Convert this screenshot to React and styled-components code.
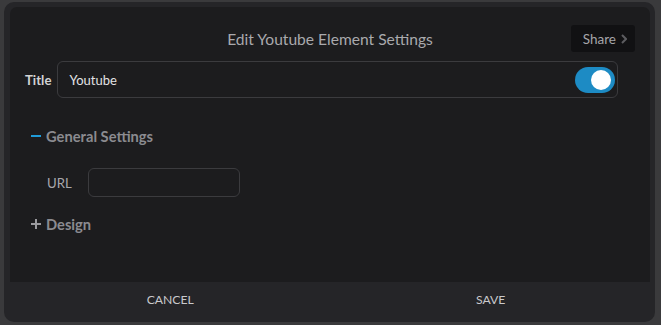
import React, { useState } from "react";
import styled, { createGlobalStyle } from "styled-components";

const GlobalStyle = createGlobalStyle`
  html, body {
    margin: 0;
    padding: 0;
    background: #3a3a3c;
    font-family: Lato, "Open Sans", sans-serif;
    overflow: hidden;
  }
`;

const Page = styled.div`
  width: 661px;
  height: 325px;
  padding: 2px 6px 3px 4px;
  box-sizing: border-box;
`;

const Modal = styled.div`
  display: flex;
  flex-direction: column;
  height: 100%;
  padding: 5px 5px 5px 6px;
  box-sizing: border-box;
  background: #252528;
  border-radius: 10px;
`;

const Panel = styled.div`
  flex: 1;
  display: flex;
  flex-direction: column;
  padding: 18px 15px 0 15px;
  background: #1c1c1e;
  border-radius: 7px 7px 0 0;
`;

const Header = styled.div`
  display: grid;
  grid-template-columns: 1fr auto 1fr;
  align-items: center;
  height: 27px;
`;

const HeaderTitle = styled.div`
  grid-column: 2;
  font-size: 15.6px;
  color: #a9a9ad;
  margin-top: 1px;
`;

const ShareButton = styled.button`
  grid-column: 3;
  justify-self: end;
  display: flex;
  align-items: center;
  gap: 5px;
  height: 27px;
  padding: 0 8px 0 12px;
  border: none;
  border-radius: 3px;
  background: #111113;
  color: #a5a5a9;
  font-family: inherit;
  font-size: 13.5px;
`;

const TitleRow = styled.div`
  display: flex;
  align-items: center;
  gap: 6px;
  margin: 9px 17px 0 0;
`;

const Label = styled.label`
  font-size: 13.2px;
  font-weight: ${(p) => (p.$bold ? 700 : 400)};
  color: ${(p) => (p.$bold ? "#d2d2d4" : "#a8a8ac")};
`;

const TitleBox = styled.div`
  flex: 1;
  display: flex;
  align-items: center;
  justify-content: space-between;
  height: 37px;
  padding: 0 2px 0 11px;
  box-sizing: border-box;
  border: 1px solid #3b3b3e;
  border-radius: 6px;
  font-size: 13px;
  color: #e2e2e4;
`;

const Toggle = styled.button`
  position: relative;
  width: 40px;
  height: 26px;
  padding: 0;
  border: none;
  border-radius: 13px;
  background: ${(p) => (p.$on ? "#1d8bc4" : "#4a4a4e")};
  cursor: pointer;
`;

const Knob = styled.span`
  position: absolute;
  top: 3px;
  left: ${(p) => (p.$on ? "16px" : "4px")};
  width: 20px;
  height: 20px;
  border-radius: 50%;
  background: #ffffff;
`;

const Section = styled.div`
  margin-left: 6px;
`;

const SectionHeader = styled.div`
  display: flex;
  align-items: center;
  gap: 5px;
  margin-top: ${(p) => p.$top}px;
  height: 18px;
  font-size: 14.7px;
  font-weight: 700;
  color: #8b8b90;
`;

const Sign = styled.span`
  position: relative;
  width: 10px;
  height: 10px;
  &::before,
  &::after {
    content: "";
    position: absolute;
    background: ${(p) => (p.$open ? "#1f9bd8" : "#9a9a9e")};
  }
  &::before {
    left: 0;
    right: 0;
    top: 4px;
    height: 2px;
  }
  &::after {
    display: ${(p) => (p.$open ? "none" : "block")};
    top: 0;
    bottom: 0;
    left: 4px;
    width: 2px;
  }
`;

const FieldRow = styled.div`
  display: flex;
  align-items: center;
  gap: 16px;
  margin: 23px 0 0 16px;
`;

const TextInput = styled.input`
  width: 152px;
  height: 29px;
  box-sizing: border-box;
  border: 1px solid #3b3b3e;
  border-radius: 6px;
  background: transparent;
  color: #e2e2e4;
  font-family: inherit;
  font-size: 13px;
  padding: 0 10px;
  outline: none;
`;

const Footer = styled.div`
  display: flex;
  height: 35px;
  margin: 0 -5px 0 -6px;
`;

const FooterButton = styled.button`
  flex: 1;
  border: none;
  background: transparent;
  color: #c9c9cc;
  font-family: inherit;
  font-size: 12.2px;
  text-transform: uppercase;
  cursor: pointer;
  padding: 0 ${(p) => (p.$right ? p.$right : 0)}px 0 ${(p) => (p.$left ? p.$left : 0)}px;
`;

const Chevron = () => (
  <svg width="6" height="10" viewBox="0 0 6 10">
    <path d="M1 1l4 4-4 4" fill="none" stroke="#5c5c60" strokeWidth="2" />
  </svg>
);

const App = () => {
  const [enabled, setEnabled] = useState(true);
  const [url, setUrl] = useState("");

  return (
    <>
      <GlobalStyle />
      <Page>
        <Modal>
          <Panel>
            <Header>
              <HeaderTitle>Edit Youtube Element Settings</HeaderTitle>
              <ShareButton>
                Share <Chevron />
              </ShareButton>
            </Header>
            <TitleRow>
              <Label $bold>Title</Label>
              <TitleBox>
                Youtube
                <Toggle $on={enabled} onClick={() => setEnabled(!enabled)}>
                  <Knob $on={enabled} />
                </Toggle>
              </TitleBox>
            </TitleRow>
            <Section>
              <SectionHeader $top={29}>
                <Sign $open />
                General Settings
              </SectionHeader>
              <FieldRow>
                <Label>URL</Label>
                <TextInput value={url} onChange={(e) => setUrl(e.target.value)} />
              </FieldRow>
              <SectionHeader $top={18}>
                <Sign />
                Design
              </SectionHeader>
            </Section>
          </Panel>
          <Footer>
            <FooterButton $left={6}>Cancel</FooterButton>
            <FooterButton $right={4}>Save</FooterButton>
          </Footer>
        </Modal>
      </Page>
    </>
  );
};

export default App;
